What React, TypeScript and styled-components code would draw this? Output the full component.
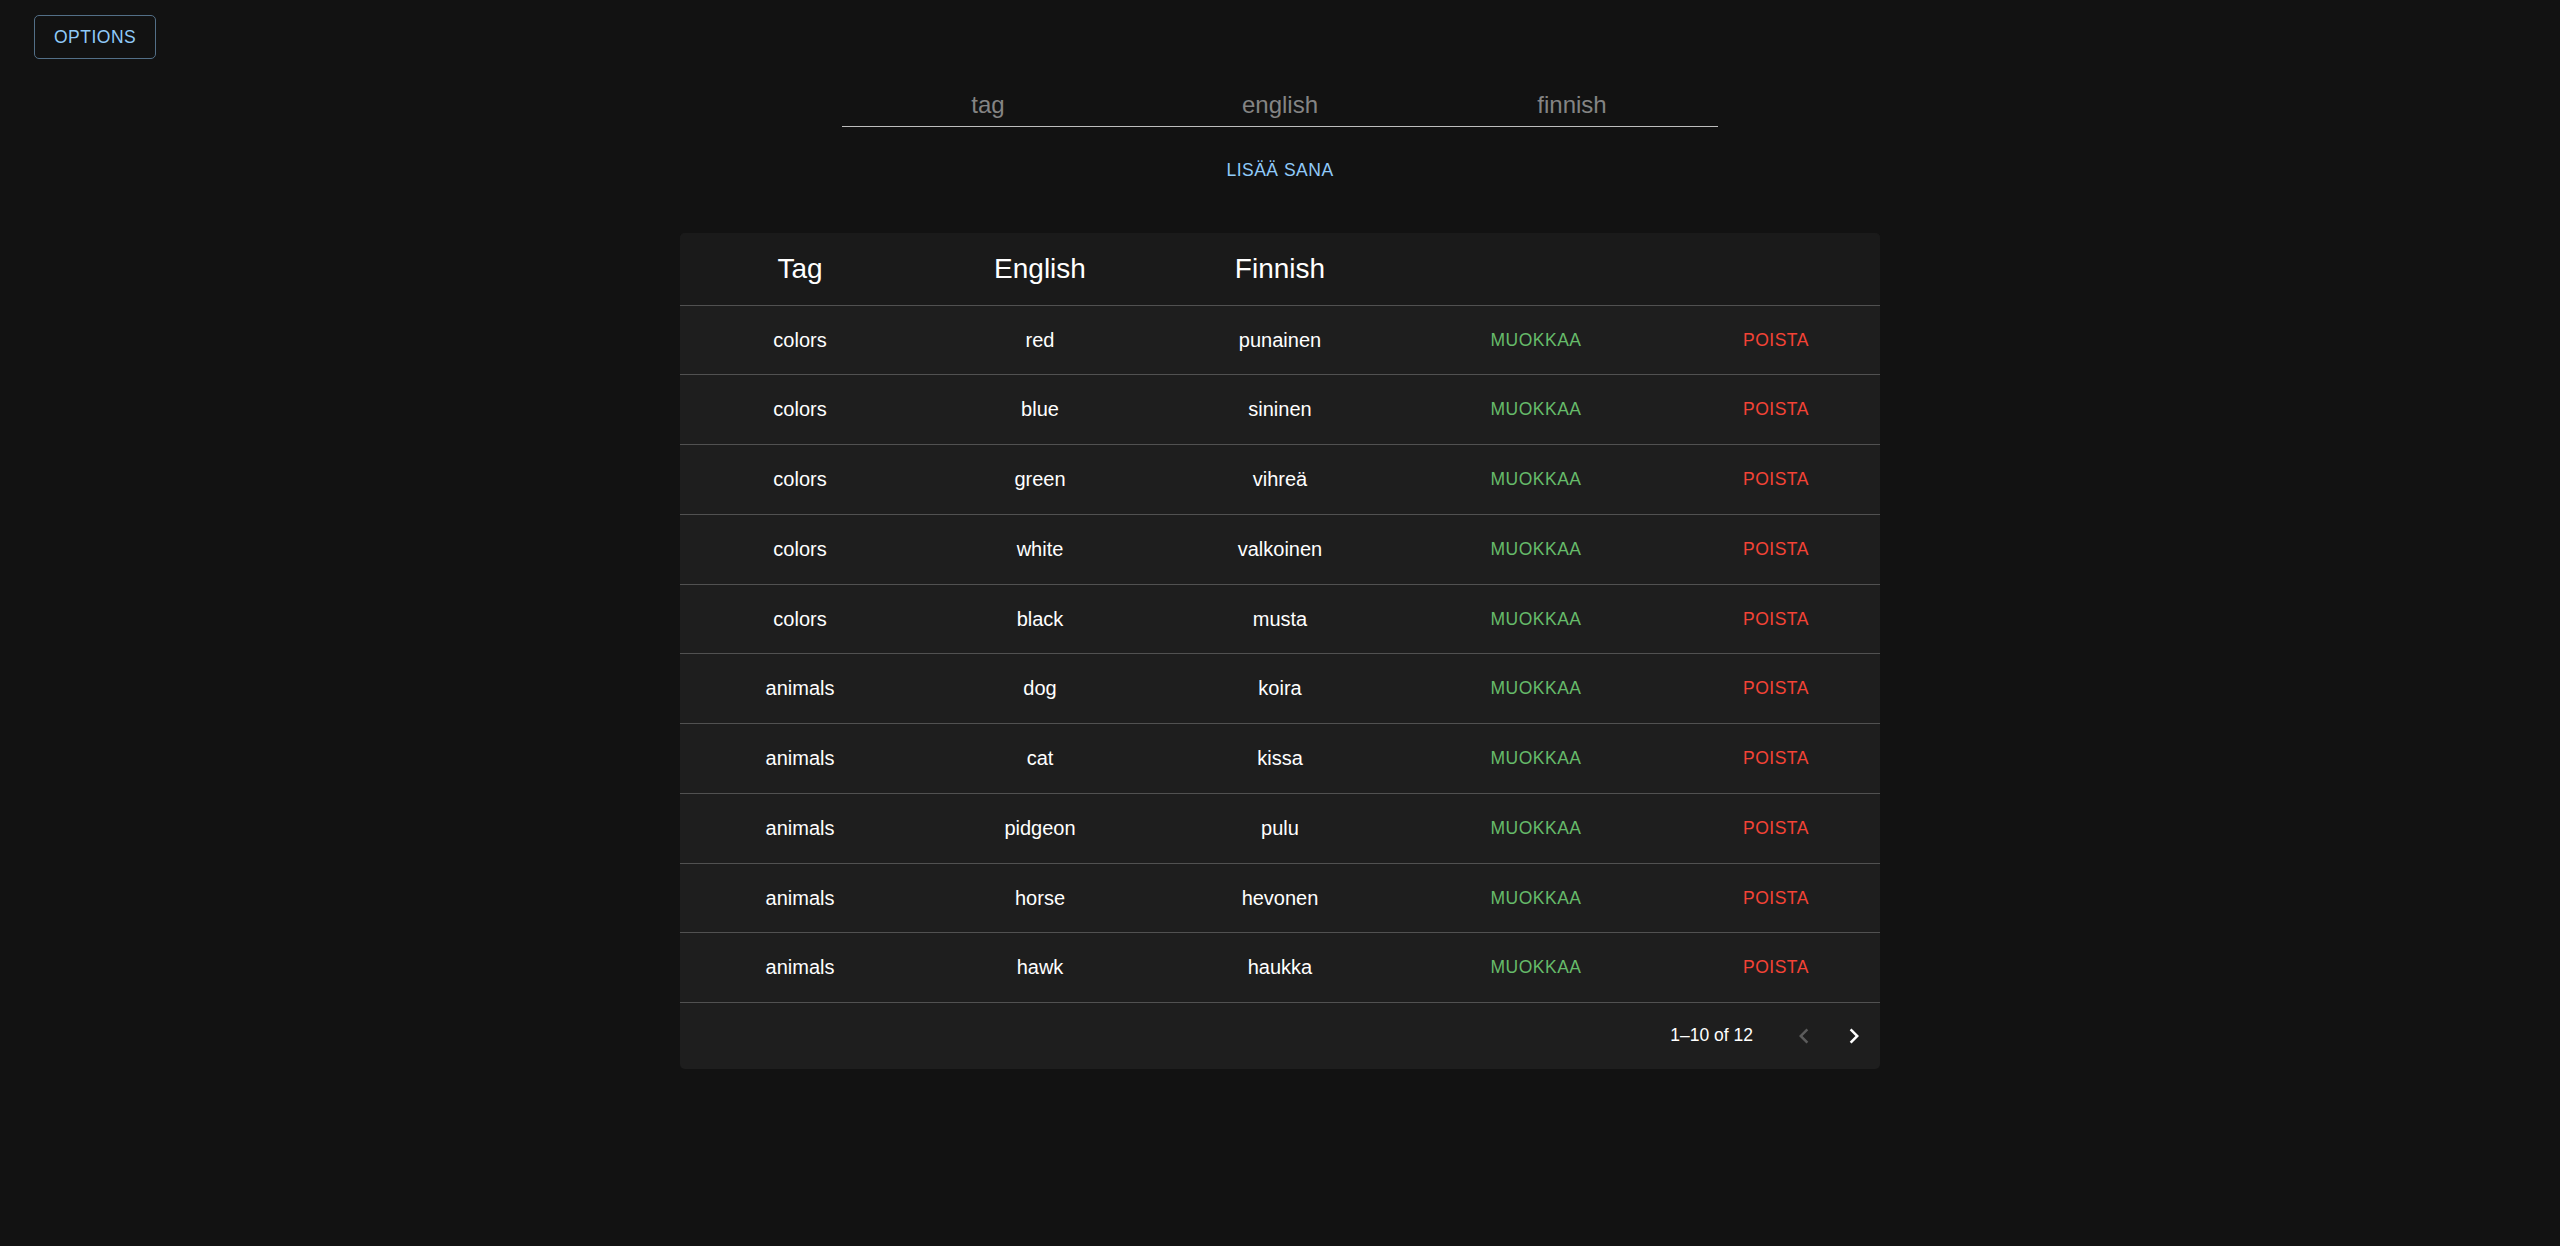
import React from "react";
import styled, { createGlobalStyle } from "styled-components";

const GlobalStyle = createGlobalStyle`
  html, body {
    margin: 0;
    padding: 0;
    background: #121212;
    font-family: "Liberation Sans", Arial, Helvetica, sans-serif;
  }
  * { box-sizing: border-box; }
`;

const Page = styled.div`
  min-height: 100vh;
  background: #121212;
  color: #ffffff;
`;

const TopBar = styled.div`
  display: flex;
  padding: 15px 0 0 34px;
`;

const OutlinedButton = styled.button`
  display: inline-flex;
  align-items: center;
  justify-content: center;
  height: 44px;
  padding: 0 19px;
  background: transparent;
  border: 1px solid #536f87;
  border-radius: 5px;
  color: #90caf9;
  font-family: inherit;
  font-size: 17.5px;
  letter-spacing: 0.5px;
  text-transform: uppercase;
  cursor: pointer;
`;

const Form = styled.div`
  display: flex;
  flex-direction: column;
  align-items: center;
  margin-top: 32px;
`;

const InputRow = styled.div`
  display: flex;
`;

const WordInput = styled.input`
  width: 292px;
  height: 36px;
  padding: 0 0 7px;
  line-height: 28px;
  background: transparent;
  border: none;
  border-bottom: 1px solid #bdbdbd;
  outline: none;
  color: #ffffff;
  font-family: inherit;
  font-size: 24px;
  text-align: center;
  &::placeholder {
    color: #848484;
    opacity: 1;
  }
`;

const TextButton = styled.button`
  margin-top: 20.5px;
  padding: 7.5px 10px;
  background: none;
  border: none;
  border-radius: 5px;
  color: #90caf9;
  font-family: inherit;
  font-size: 17.5px;
  line-height: 1.75;
  letter-spacing: 0.5px;
  text-transform: uppercase;
  cursor: pointer;
`;

const TableCard = styled.div`
  width: 1200px;
  margin: 39.5px auto 0;
  background: #1e1e1e;
  border-radius: 5px;
  overflow: hidden;
`;

const HeaderRow = styled.div`
  display: grid;
  grid-template-columns: repeat(5, 240px);
  align-items: center;
  height: 73px;
  background: #1a1a1a;
  border-bottom: 1px solid #515151;
`;

const HeaderCell = styled.div`
  text-align: center;
  font-size: 28px;
  color: #ffffff;
`;

const Row = styled.div`
  display: grid;
  grid-template-columns: repeat(5, 240px);
  align-items: center;
  height: 69.75px;
  border-bottom: 1.25px solid #515151;
`;

const Cell = styled.div`
  text-align: center;
  font-size: 20px;
  color: #ffffff;
`;

const ActionCell = styled.div`
  display: flex;
  justify-content: center;
  padding-left: 32px;
`;

const ActionButton = styled.button<{ $tone: "edit" | "delete" }>`
  padding: 7.5px 10px;
  background: none;
  border: none;
  color: ${(p) => (p.$tone === "edit" ? "#66bb6a" : "#f44336")};
  font-family: inherit;
  font-size: 17.5px;
  line-height: 1.75;
  letter-spacing: 0.5px;
  text-transform: uppercase;
  cursor: pointer;
`;

const Pagination = styled.div`
  display: flex;
  justify-content: flex-end;
  align-items: center;
  height: 65.5px;
  padding-right: 1px;
`;

const PageInfo = styled.span`
  font-size: 17.5px;
  color: #ffffff;
`;

const PageActions = styled.div`
  display: flex;
  margin-left: 26px;
`;

const IconButton = styled.button<{ $disabled?: boolean }>`
  display: flex;
  align-items: center;
  justify-content: center;
  width: 50px;
  height: 50px;
  padding: 0;
  background: none;
  border: none;
  border-radius: 50%;
  color: ${(p) => (p.$disabled ? "#5b5b5b" : "#ffffff")};
  cursor: ${(p) => (p.$disabled ? "default" : "pointer")};
`;

const Chevron = ({ dir }: { dir: "left" | "right" }) => (
  <svg width="30" height="30" viewBox="0 0 24 24" fill="currentColor">
    {dir === "left" ? (
      <path d="M15.41 7.41 14 6l-6 6 6 6 1.41-1.41L10.83 12z" />
    ) : (
      <path d="M10 6 8.59 7.41 13.17 12l-4.58 4.59L10 18l6-6z" />
    )}
  </svg>
);

const words = [
  { tag: "colors", english: "red", finnish: "punainen" },
  { tag: "colors", english: "blue", finnish: "sininen" },
  { tag: "colors", english: "green", finnish: "vihreä" },
  { tag: "colors", english: "white", finnish: "valkoinen" },
  { tag: "colors", english: "black", finnish: "musta" },
  { tag: "animals", english: "dog", finnish: "koira" },
  { tag: "animals", english: "cat", finnish: "kissa" },
  { tag: "animals", english: "pidgeon", finnish: "pulu" },
  { tag: "animals", english: "horse", finnish: "hevonen" },
  { tag: "animals", english: "hawk", finnish: "haukka" },
];

export default function App() {
  return (
    <Page>
      <GlobalStyle />
      <TopBar>
        <OutlinedButton>Options</OutlinedButton>
      </TopBar>
      <Form>
        <InputRow>
          <WordInput placeholder="tag" />
          <WordInput placeholder="english" />
          <WordInput placeholder="finnish" />
        </InputRow>
        <TextButton>Lisää sana</TextButton>
      </Form>
      <TableCard>
        <HeaderRow>
          <HeaderCell>Tag</HeaderCell>
          <HeaderCell>English</HeaderCell>
          <HeaderCell>Finnish</HeaderCell>
          <HeaderCell />
          <HeaderCell />
        </HeaderRow>
        {words.map((w, i) => (
          <Row key={i}>
            <Cell>{w.tag}</Cell>
            <Cell>{w.english}</Cell>
            <Cell>{w.finnish}</Cell>
            <ActionCell>
              <ActionButton $tone="edit">Muokkaa</ActionButton>
            </ActionCell>
            <ActionCell>
              <ActionButton $tone="delete">Poista</ActionButton>
            </ActionCell>
          </Row>
        ))}
        <Pagination>
          <PageInfo>1–10 of 12</PageInfo>
          <PageActions>
            <IconButton $disabled>
              <Chevron dir="left" />
            </IconButton>
            <IconButton>
              <Chevron dir="right" />
            </IconButton>
          </PageActions>
        </Pagination>
      </TableCard>
    </Page>
  );
}
